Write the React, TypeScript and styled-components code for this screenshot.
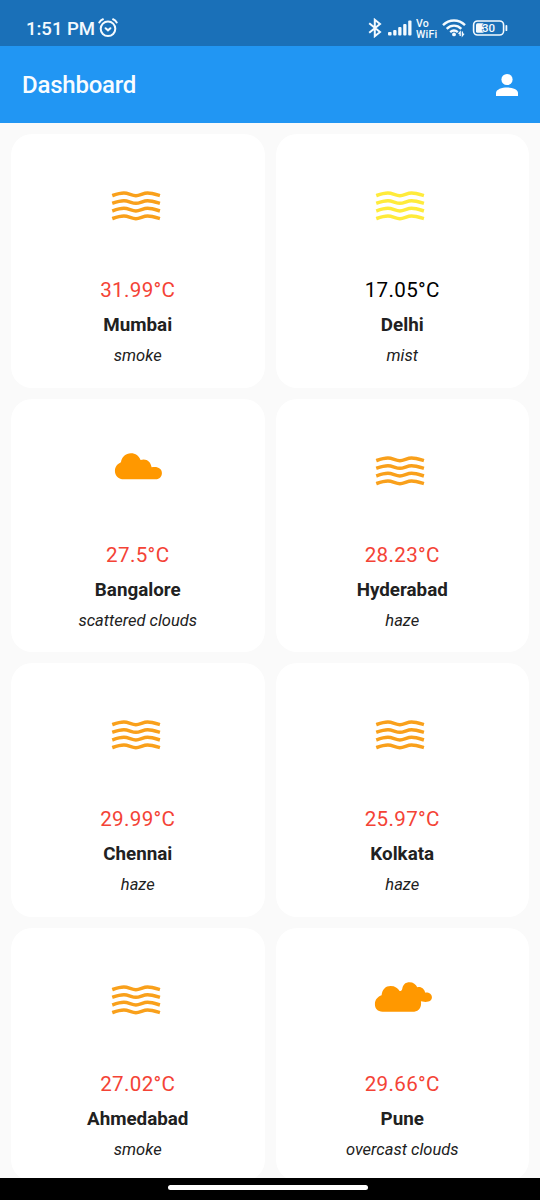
import React from 'react';
import styled, { createGlobalStyle } from 'styled-components';

const GlobalStyle = createGlobalStyle`
  body { margin: 0; background: #fafafa; font-family: Roboto, sans-serif; }
`;

const Screen = styled.div`
  width: 540px;
  height: 1200px;
  display: flex;
  flex-direction: column;
  overflow: hidden;
  background: #fafafa;
`;

const StatusBar = styled.div`
  flex: none;
  box-sizing: border-box;
  height: 46.4px;
  padding: 10px 32px 0 26px;
  display: flex;
  align-items: center;
  background: #1a70b8;
  color: #f4fafe;
`;

const Clock = styled.span`
  width: 72px;
  padding-top: 2px;
  font-size: 18.6px;
  font-weight: 500;
  line-height: 24px;
  letter-spacing: -0.05px;
  white-space: nowrap;
`;

const StatusIcons = styled.div`
  margin-left: auto;
  display: flex;
  align-items: center;
`;

const VoWifi = styled.div`
  display: flex;
  flex-direction: column;
  width: 26px;
  margin-left: 4px;
  font-size: 10.6px;
  font-weight: 500;
  line-height: 11px;
  letter-spacing: 0.2px;
  padding-top: 2px;
`;

const TextLine = styled.span`
  height: 11px;
  overflow: hidden;
`;

const AppBar = styled.header`
  flex: none;
  box-sizing: border-box;
  height: 77.1px;
  padding: 0 18px 0 22px;
  display: flex;
  align-items: center;
  justify-content: space-between;
  background: #2196f3;
`;

const Title = styled.h1`
  margin: 0;
  color: #f8fcff;
  font-size: 24px;
  font-weight: 500;
  line-height: 30px;
  letter-spacing: -0.22px;
`;

const Grid = styled.main`
  flex: 1;
  min-height: 0;
  overflow: hidden;
  padding: 11px 11px 0;
  display: grid;
  grid-template-columns: 1fr 1fr;
  grid-auto-rows: 253.5px;
  gap: 11px;
`;

const Card = styled.article`
  box-sizing: border-box;
  padding-top: 36.6px;
  display: flex;
  flex-direction: column;
  align-items: center;
  border-radius: 21px;
  background: #fff;
`;

const WeatherIcon = styled.svg`
  display: block;
  filter: blur(0.6px);
`;

const Temperature = styled.div<{ $cool?: boolean }>`
  margin-top: 35.4px;
  color: ${(p) => (p.$cool ? '#000' : '#f44336')};
  font-size: 20.6px;
  line-height: 28px;
  letter-spacing: 0.34px;
`;

const City = styled.div`
  margin-top: 9px;
  color: #212121;
  font-size: 18.8px;
  font-weight: 700;
  line-height: 24px;
`;

const Condition = styled.div`
  margin-top: 7px;
  color: #212121;
  font-size: 16.5px;
  font-style: italic;
  line-height: 24px;
`;

const NavBar = styled.footer`
  flex: none;
  height: 22px;
  padding-right: 4px;
  display: flex;
  justify-content: center;
  background: #000;
`;

const NavHandle = styled.div`
  width: 200px;
  height: 5px;
  margin-top: 7px;
  border-radius: 3px;
  background: #fff;
`;

type Kind = 'waves' | 'cloud' | 'clouds';

function Weather({ kind, color }: { kind: Kind; color: string }) {
  return (
    <WeatherIcon width="100" height="70" viewBox="-6.75 1 300 210">
      {kind === 'waves' && (
        <g fill="none" stroke={color} strokeWidth="10.5">
          {[0, 23, 46, 69].map((y) => (
            <path key={y} d={`M66 ${75 + y}C80 ${70 + y} 88 ${67 + y} 101 ${67 + y}S125 ${75 + y} 137 ${75 + y}S159 ${67 + y} 172 ${67 + y}S196 ${71 + y} 209 ${75 + y}`} />
          ))}
        </g>
      )}
      {kind === 'cloud' && (
        <path
          fill={color}
          d="M101 131C85 131 74 120 74 106C74 93 82 85 92 80C95 64 106 53 122 53C136 53 146 61 151 73C168 67 182 78 184 95C202 91 215 99 215 112C215 123 208 131 196 131Z"
        />
      )}
      {kind === 'clouds' && (
        <path
          fill={color}
          transform="translate(2 3)"
          d="M83 138C68 138 60 129 60 115C60 102 69 93 80 89C82 71 92 61 107 61C120 61 129 67 134 76C139 76 141 73 142 69C145 56 152 50 164 50C175 50 183 56 187 65C199 62 208 70 211 81C222 80 231 85 231 95C231 104 224 109 212 109L198 107C201 124 192 138 178 138Z"
        />
      )}
    </WeatherIcon>
  );
}

const cities: { city: string; temp: string; condition: string; kind: Kind; cool?: boolean }[] = [
  { city: 'Mumbai', temp: '31.99', condition: 'smoke', kind: 'waves' },
  { city: 'Delhi', temp: '17.05', condition: 'mist', kind: 'waves', cool: true },
  { city: 'Bangalore', temp: '27.5', condition: 'scattered clouds', kind: 'cloud' },
  { city: 'Hyderabad', temp: '28.23', condition: 'haze', kind: 'waves' },
  { city: 'Chennai', temp: '29.99', condition: 'haze', kind: 'waves' },
  { city: 'Kolkata', temp: '25.97', condition: 'haze', kind: 'waves' },
  { city: 'Ahmedabad', temp: '27.02', condition: 'smoke', kind: 'waves' },
  { city: 'Pune', temp: '29.66', condition: 'overcast clouds', kind: 'clouds' },
];

const AlarmIcon = () => (
  <svg width="20" height="20" viewBox="0 0 20 20" fill="none" stroke="currentColor" strokeWidth="2" strokeLinecap="round">
    <circle cx="10" cy="10.8" r="7.3" />
    <path d="M1.3 4.4C2.1 3 3.3 1.9 4.9 1.3M18.7 4.4C17.9 3 16.7 1.9 15.1 1.3M7.6 10.2L10 12.3L12.4 10.2" />
  </svg>
);

const BluetoothIcon = () => (
  <svg width="14" height="20" viewBox="0 0 14 20" fill="none" stroke="currentColor" strokeWidth="2">
    <path d="M1.2 5.2L12 14L6.8 18.2V1.8L12 6L1.2 14.8" />
  </svg>
);

const SignalIcon = () => (
  <svg width="24" height="20" viewBox="0 0 24 20" fill="currentColor" style={{ marginLeft: 6 }}>
    <rect x="0" y="14" width="3.6" height="3.6" rx="1" />
    <rect x="5.2" y="12" width="3.3" height="5.6" rx="1" />
    <rect x="10.2" y="9" width="3.3" height="8.6" rx="1" />
    <rect x="15.2" y="6" width="3.3" height="11.6" rx="1" />
    <rect x="20.2" y="2.6" width="3.3" height="15" rx="1" />
  </svg>
);

const WifiIcon = () => (
  <svg width="24" height="20" viewBox="0 0 24 20" fill="none" stroke="currentColor" strokeWidth="2.4">
    <path d="M1 7.1C7.3 .9 16.7 .9 23 7.1M4.7 10.8C9 6.6 15 6.6 19.3 10.8M8.2 14.1C10.7 12 13.3 12 15.8 14.1" />
    <circle cx="12" cy="16.4" r="1.9" fill="currentColor" stroke="none" />
    <path d="M18.2 18V14L16.6 16M20.4 13.6V17.6L22 15.6" strokeWidth="1.3" />
  </svg>
);

const BatteryIcon = () => (
  <svg width="36" height="16" viewBox="0 0 36 16" style={{ marginLeft: 6 }}>
    <rect x="1.6" y="1" width="30" height="14" rx="4" fill="none" stroke="currentColor" strokeWidth="1.6" />
    <rect x="4" y="3.3" width="8" height="9.4" rx="1.5" fill="currentColor" />
    <path d="M34.4 5.8V10.2" stroke="currentColor" strokeWidth="1.8" strokeLinecap="round" />
    <text x="16.6" y="12.2" fill="currentColor" stroke="#1a70b8" strokeWidth="1" paintOrder="stroke" fontFamily="Roboto, sans-serif" fontSize="11.5" fontWeight="500" textAnchor="middle">30</text>
  </svg>
);

const PersonIcon = () => (
  <svg width="30" height="30" viewBox="0 0 30 30" fill="#fff">
    <circle cx="15" cy="9.5" r="5.6" />
    <path d="M4 26V23C4 19.3 10 17.5 15 17.5S26 19.3 26 23V26Z" />
  </svg>
);

export default function App() {
  return (
    <Screen>
      <GlobalStyle />
      <StatusBar>
        <Clock>1:51 PM</Clock>
        <AlarmIcon />
        <StatusIcons>
          <BluetoothIcon />
          <SignalIcon />
          <VoWifi>
            <TextLine>Vo</TextLine>
            <TextLine>WiFi</TextLine>
          </VoWifi>
          <WifiIcon />
          <BatteryIcon />
        </StatusIcons>
      </StatusBar>
      <AppBar>
        <Title>Dashboard</Title>
        <PersonIcon />
      </AppBar>
      <Grid>
        {cities.map((c) => (
          <Card key={c.city}>
            <Weather kind={c.kind} color={c.cool ? '#ffeb3b' : c.kind === 'waves' ? '#f9a01b' : '#ff9800'} />
            <Temperature $cool={c.cool}>{c.temp}°C</Temperature>
            <City>{c.city}</City>
            <Condition>{c.condition}</Condition>
          </Card>
        ))}
      </Grid>
      <NavBar>
        <NavHandle />
      </NavBar>
    </Screen>
  );
}
